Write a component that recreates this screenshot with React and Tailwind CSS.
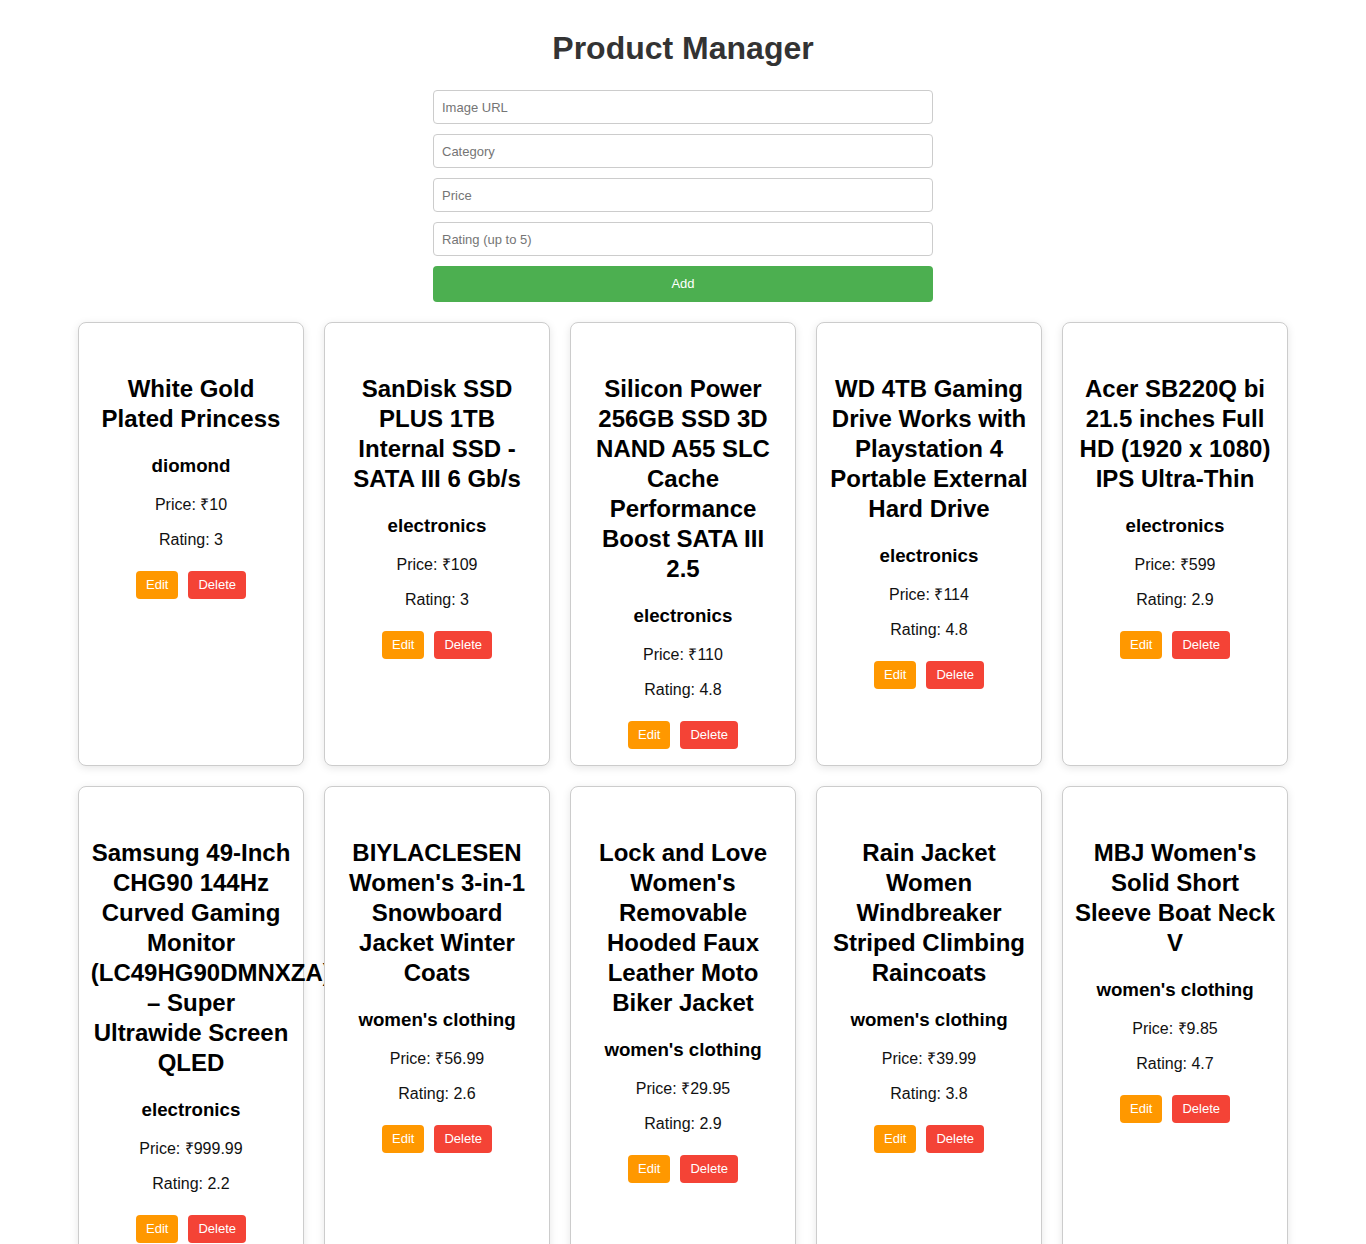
import { useState } from "react";

const PRODUCTS = [
  { id: 1, title: "White Gold Plated Princess", category: "diomond", price: 10, rating: 3 },
  { id: 2, title: "SanDisk SSD PLUS 1TB Internal SSD - SATA III 6 Gb/s", category: "electronics", price: 109, rating: 3 },
  { id: 3, title: "Silicon Power 256GB SSD 3D NAND A55 SLC Cache Performance Boost SATA III 2.5", category: "electronics", price: 110, rating: 4.8 },
  { id: 4, title: "WD 4TB Gaming Drive Works with Playstation 4 Portable External Hard Drive", category: "electronics", price: 114, rating: 4.8 },
  { id: 5, title: "Acer SB220Q bi 21.5 inches Full HD (1920 x 1080) IPS Ultra-Thin", category: "electronics", price: 599, rating: 2.9 },
  { id: 6, title: "Samsung 49-Inch CHG90 144Hz Curved Gaming Monitor (LC49HG90DMNXZA) – Super Ultrawide Screen QLED", category: "electronics", price: 999.99, rating: 2.2 },
  { id: 7, title: "BIYLACLESEN Women's 3-in-1 Snowboard Jacket Winter Coats", category: "women's clothing", price: 56.99, rating: 2.6 },
  { id: 8, title: "Lock and Love Women's Removable Hooded Faux Leather Moto Biker Jacket", category: "women's clothing", price: 29.95, rating: 2.9 },
  { id: 9, title: "Rain Jacket Women Windbreaker Striped Climbing Raincoats", category: "women's clothing", price: 39.99, rating: 3.8 },
  { id: 10, title: "MBJ Women's Solid Short Sleeve Boat Neck V", category: "women's clothing", price: 9.85, rating: 4.7 },
];

function ProductCard({ product, onDelete }) {
  return (
    <div className="w-[226px] border border-[#ccc] rounded-[8px] bg-white shadow-[0_2px_8px_rgba(0,0,0,0.1)] text-center px-[11.75px] pt-[51px] pb-[16px]">
      <h2 className="text-[24px] font-bold leading-[30px] text-black">{product.title}</h2>
      <h3 className="mt-[21px] text-[18.72px] font-bold leading-[22px] text-black">{product.category}</h3>
      <p className="mt-[19px] text-[16px] leading-[18px] text-[#111]">Price: ₹{product.price}</p>
      <p className="mt-[17px] text-[16px] leading-[18px] text-[#111]">Rating: {product.rating}</p>
      <div className="mt-[22px] flex justify-center gap-[10px]">
        <button className="h-[28px] px-[10px] rounded-[4px] bg-[#ff9800] text-white text-[13px]">Edit</button>
        <button
          onClick={() => onDelete(product.id)}
          className="h-[28px] px-[10px] rounded-[4px] bg-[#f44336] text-white text-[13px]"
        >
          Delete
        </button>
      </div>
    </div>
  );
}

export default function App() {
  const [products, setProducts] = useState(PRODUCTS);

  const campos = ["Image URL", "Category", "Price", "Rating (up to 5)"];

  return (
    <div className="min-h-screen bg-white font-['Liberation_Sans',Arial,sans-serif]">
      <h1 className="pt-[30px] text-center text-[32px] font-bold leading-[37px] text-[#333]">Product Manager</h1>

      <div className="w-[500px] mx-auto mt-[23px] flex flex-col gap-[10px]">
        {campos.map((c) => (
          <input
            key={c}
            placeholder={c}
            className="h-[34px] px-[8px] border border-[#ccc] rounded-[4px] text-[13px] outline-none placeholder:text-[#757575]"
          />
        ))}
        <button className="h-[36px] rounded-[4px] bg-[#4caf50] text-white text-[13px]">Add</button>
      </div>

      <div className="mt-[20px] flex flex-wrap justify-center gap-[20px] pb-[20px]">
        {products.map((p) => (
          <ProductCard key={p.id} product={p} onDelete={(id) => setProducts(products.filter((x) => x.id !== id))} />
        ))}
      </div>
    </div>
  );
}
